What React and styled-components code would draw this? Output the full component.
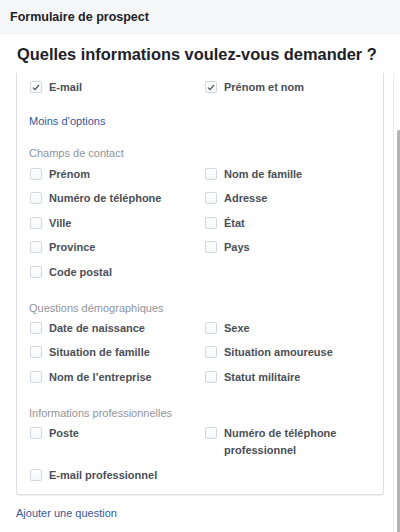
import React from "react";
import styled, { createGlobalStyle } from "styled-components";

const GlobalStyle = createGlobalStyle`
    html, body {
        margin: 0;
        padding: 0;
        background: #ffffff;
        font-family: "Liberation Sans", Arial, Helvetica, sans-serif;
    }
    * {
        box-sizing: border-box;
    }
`;

const Page = styled.div`
    width: 400px;
    height: 532px;
    overflow: hidden;
    display: flex;
    flex-direction: column;
    background: #ffffff;
`;

const Header = styled.div`
    height: 34px;
    flex-shrink: 0;
    display: flex;
    align-items: center;
    padding-left: 10px;
    background: #f5f6f7;
    border-bottom: 1px solid #eceef1;
    color: #1d2129;
    font-size: 12.5px;
    font-weight: bold;
`;

const Title = styled.h2`
    margin: 0;
    padding: 10px 0 0 17px;
    height: 39px;
    flex-shrink: 0;
    font-size: 16.4px;
    line-height: 20px;
    font-weight: bold;
    color: #1d2129;
`;

const Body = styled.div`
    flex: 1;
    display: flex;
    min-height: 0;
`;

const Scroller = styled.div`
    flex: 1;
    padding-left: 16px;
    padding-right: 9px;
`;

const Track = styled.div`
    width: 7px;
    flex-shrink: 0;
    border-left: 1px solid #ececec;
    display: flex;
    justify-content: flex-end;
    padding-top: 57px;
`;

const Thumb = styled.div`
    width: 3px;
    height: 100%;
    background: #b4b4b4;
    border-radius: 2px 0 0 0;
`;

const Card = styled.div`
    border: 1px solid #dddfe2;
    border-top: none;
    border-radius: 0 0 3px 3px;
    box-shadow: 0 1px 1px rgba(0, 0, 0, 0.06);
    padding: 2px 0 7px 13px;
`;

const Grid = styled.div`
    display: grid;
    grid-template-columns: 175px 1fr;
`;

const Option = styled.label`
    display: flex;
    align-items: flex-start;
    padding: 4px 0;
    font-size: 11px;
    line-height: 16.6px;
    font-weight: bold;
    color: #4b4f56;
`;

const Box = styled.span`
    width: 12px;
    height: 12px;
    flex-shrink: 0;
    margin: 2px 7px 0 0;
    border: 1px solid #d4d7dc;
    border-radius: 2px;
    background: linear-gradient(#ffffff, #f6f7f9);
    display: flex;
    align-items: center;
    justify-content: center;
`;

const Label = styled.span`
    max-width: ${(props) => (props.narrow ? "120px" : "none")};
`;

const MoreLink = styled.div`
    margin: 14px 0 18px -1px;
    font-size: 11px;
    line-height: 14px;
    color: #365899;
`;

const SectionTitle = styled.div`
    font-size: 11px;
    line-height: 14px;
    color: #90949c;
    margin-bottom: ${(props) => (props.tight ? "1px" : "2px")};
    margin-left: -1px;
`;

const Section = styled.div`
    & + & {
        margin-top: 16px;
    }
    &:last-child {
        margin-top: 17px;
    }
`;

const AddLink = styled.div`
    margin-top: 11px;
    font-size: 11px;
    line-height: 14px;
    color: #365899;
`;

const Checkbox = ({ checked }) => (
    <Box>
        {checked && (
            <svg width="8" height="7" viewBox="0 0 8 7">
                <path d="M1 3.6 L3 5.6 L7 1" fill="none" stroke="#4b4f56" strokeWidth="1.2" />
            </svg>
        )}
    </Box>
);

const sections = [
    {
        title: "Champs de contact",
        items: ["Prénom", "Nom de famille", "Numéro de téléphone", "Adresse", "Ville", "État", "Province", "Pays", "Code postal"],
    },
    {
        title: "Questions démographiques",
        tight: true,
        items: ["Date de naissance", "Sexe", "Situation de famille", "Situation amoureuse", "Nom de l’entreprise", "Statut militaire"],
    },
    {
        title: "Informations professionnelles",
        tight: true,
        items: ["Poste", "Numéro de téléphone professionnel", "E-mail professionnel"],
    },
];

export default function App() {
    return (
        <Page>
            <GlobalStyle />
            <Header>Formulaire de prospect</Header>
            <Title>Quelles informations voulez-vous demander ?</Title>
            <Body>
                <Scroller>
                    <Card>
                        <Grid>
                            <Option>
                                <Checkbox checked />
                                <Label>E-mail</Label>
                            </Option>
                            <Option>
                                <Checkbox checked />
                                <Label>Prénom et nom</Label>
                            </Option>
                        </Grid>
                        <MoreLink>Moins d’options</MoreLink>
                        {sections.map((section) => (
                            <Section key={section.title}>
                                <SectionTitle tight={section.tight}>{section.title}</SectionTitle>
                                <Grid>
                                    {section.items.map((item) => (
                                        <Option key={item}>
                                            <Checkbox />
                                            <Label narrow={item.length > 25}>{item}</Label>
                                        </Option>
                                    ))}
                                </Grid>
                            </Section>
                        ))}
                    </Card>
                    <AddLink>Ajouter une question</AddLink>
                </Scroller>
                <Track>
                    <Thumb />
                </Track>
            </Body>
        </Page>
    );
}
